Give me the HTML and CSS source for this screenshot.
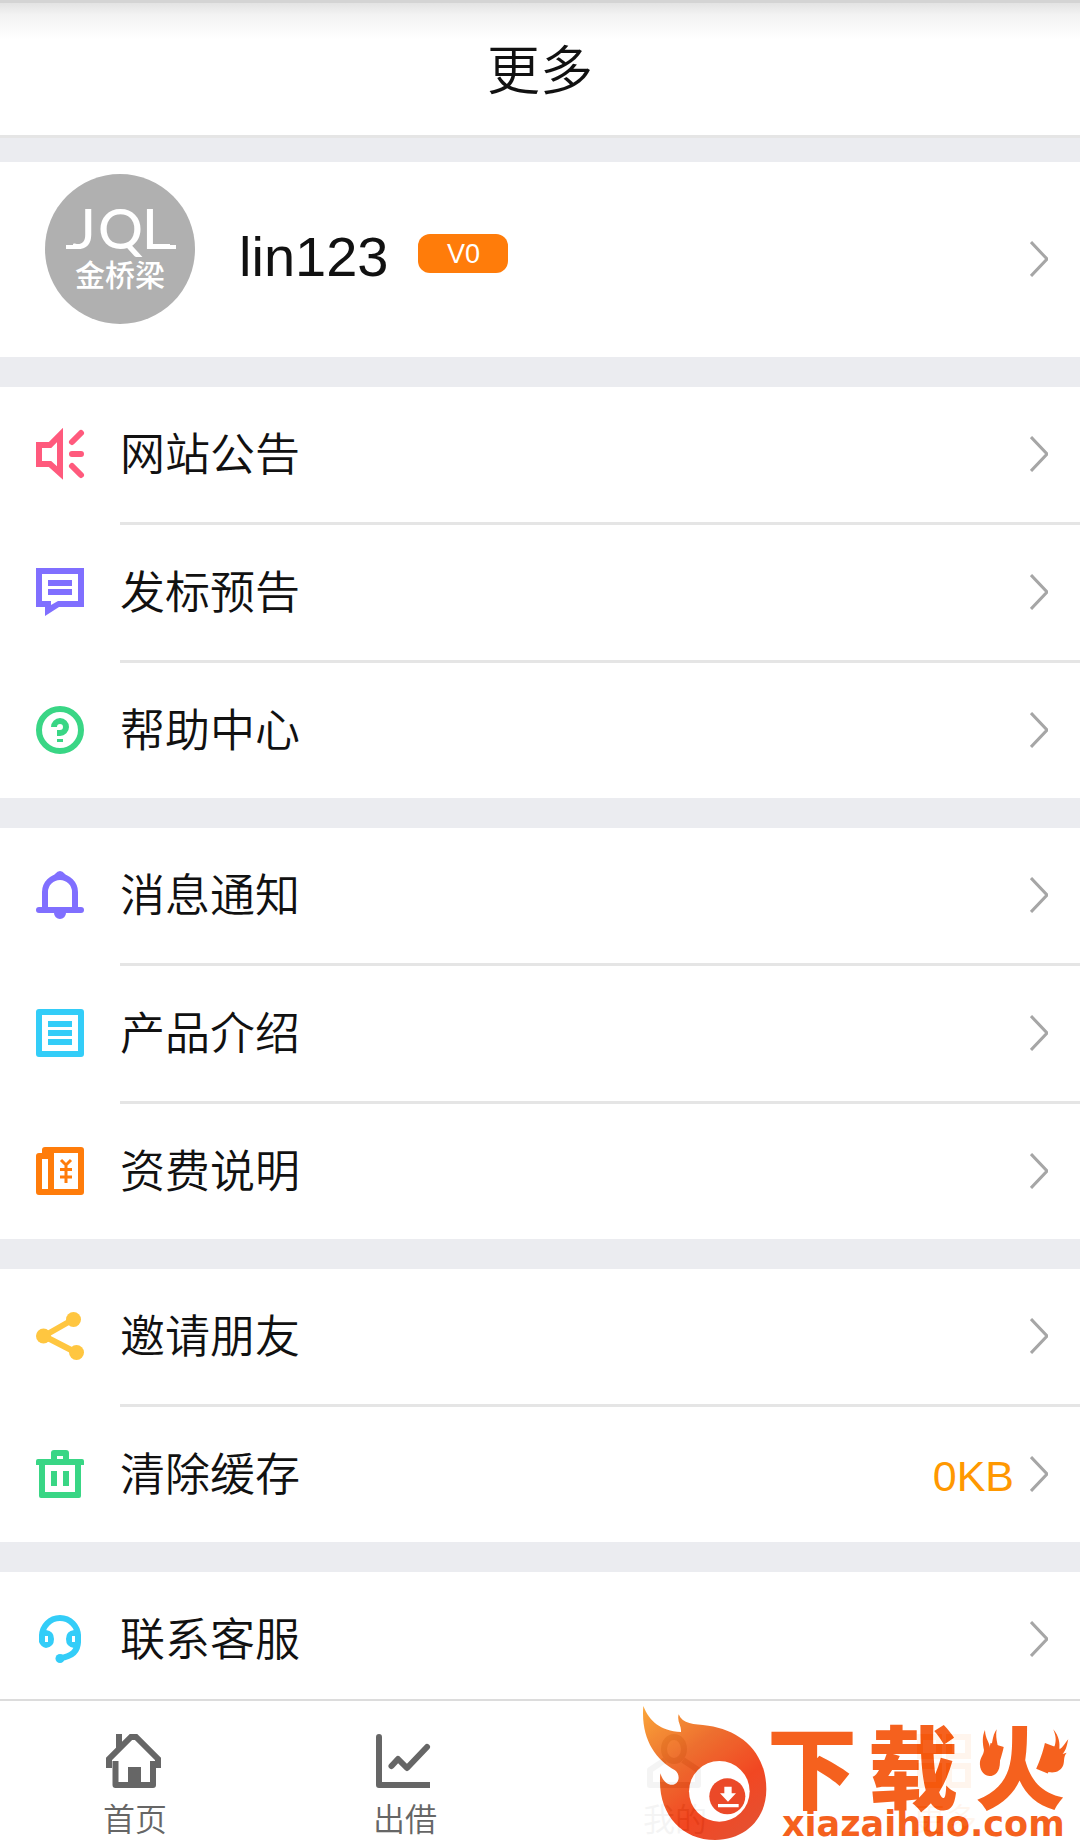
FILE: index.html
```html
<!DOCTYPE html>
<html lang="zh-CN">
<head>
<meta charset="utf-8">
<meta name="viewport" content="width=device-width, initial-scale=1">
<title>更多</title>
<link rel="stylesheet" href="styles.css">
</head>
<body>
<svg class="defs" aria-hidden="true">
  <symbol id="chevron" viewBox="0 0 18 36"><path d="M1 1L17 18L1 35" fill="none" stroke="#a6a6a6" stroke-width="3"/></symbol>
</svg>
<div class="app">
  <header class="header"><h1 class="title">更多</h1></header>

  <main class="content">
    <a class="profile" href="#profile">
      <svg class="avatar" viewBox="0 0 150 150" role="img" aria-label="JQL 金桥梁">
        <circle cx="75" cy="75" r="75" fill="#b0b0b0"/>
        <g fill="#fff">
          <text class="logo-latin" x="27 53 97" y="75">JQL</text>
          <path d="M21 71H36V75H21ZM116 71H131V75H116Z"/>
          <text class="logo-cjk" x="75" y="112" text-anchor="middle">金桥梁</text>
        </g>
      </svg>
      <span class="name">lin123</span>
      <span class="badge">V0</span>
      <svg class="chevron"><use href="#chevron"/></svg>
    </a>

    <nav class="group">
      <a class="row" href="#notice">
        <svg class="icon" viewBox="0 0 48 48" fill="none" stroke="#ff5a7d" stroke-width="6"><path d="M3 15H14L24 5V43L14 34H3Z"/><path stroke-linecap="round" d="M36 12L45 3M36 24H45M36 36L45 45"/></svg>
        <span class="cell"><span class="label">网站公告</span><svg class="chevron"><use href="#chevron"/></svg></span>
      </a>
      <a class="row" href="#preview">
        <svg class="icon" viewBox="0 0 48 48" fill="#806fff"><path fill-rule="evenodd" d="M0 0H48V39H23L9 48V39H0ZM6 6V33H15V37L22 33H42V6Z"/><path d="M12 12H36V18H12ZM12 21H36V27H12Z"/></svg>
        <span class="cell"><span class="label">发标预告</span><svg class="chevron"><use href="#chevron"/></svg></span>
      </a>
      <a class="row" href="#help">
        <svg class="icon" viewBox="0 0 48 48" fill="none" stroke="#39d685" stroke-width="6"><circle cx="24" cy="24" r="21"/><path d="M18 21a6 6 0 1 1 6 6h-3"/><path stroke-width="3" d="M21 34.500H27"/></svg>
        <span class="cell"><span class="label">帮助中心</span><svg class="chevron"><use href="#chevron"/></svg></span>
      </a>
    </nav>

    <nav class="group">
      <a class="row" href="#messages">
        <svg class="icon" viewBox="0 0 48 48" fill="#806fff"><path fill="none" stroke="#806fff" stroke-width="6" d="M9 39V21a15 15 0 0 1 30 0V39"/><path d="M14 7Q17 6 19 3Q24 -3 29 3Q31 6 34 7L30 8H18ZM18 42a6 6 0 0 0 12 0Z"/><rect y="36" width="48" height="6" rx="3"/></svg>
        <span class="cell"><span class="label">消息通知</span><svg class="chevron"><use href="#chevron"/></svg></span>
      </a>
      <a class="row" href="#products">
        <svg class="icon" viewBox="0 0 48 48" fill="#33cdf8"><path fill-rule="evenodd" d="M3 0H45Q48 0 48 3V45Q48 48 45 48H3Q0 48 0 45V3Q0 0 3 0ZM6 6V42H42V6Z"/><path d="M12 12H36V18H12ZM12 21H36V27H12ZM12 30H36V36H12Z"/></svg>
        <span class="cell"><span class="label">产品介绍</span><svg class="chevron"><use href="#chevron"/></svg></span>
      </a>
      <a class="row" href="#fees">
        <svg class="icon" viewBox="0 0 48 48" fill="#ff7c0a"><path fill-rule="evenodd" d="M9 0H45Q48 0 48 3V45Q48 48 45 48H3Q0 48 0 45V9Q0 6 3 6H6V3Q6 0 9 0ZM18 6V42H42V6ZM6 12V42H12V12Z"/><path fill="none" stroke="#ff7c0a" stroke-width="3" d="M25 13L30 18L35 13M30 18V36M24 22.500H36M24 30H36"/></svg>
        <span class="cell"><span class="label">资费说明</span><svg class="chevron"><use href="#chevron"/></svg></span>
      </a>
    </nav>

    <nav class="group">
      <a class="row" href="#invite">
        <svg class="icon" viewBox="0 0 48 48" fill="#ffc640"><path fill="none" stroke="#ffc640" stroke-width="6" d="M37 7.500L8 24L40 40.500"/><circle cx="37.500" cy="7.500" r="7.500"/><circle cx="7.500" cy="24" r="7.500"/><circle cx="40.500" cy="40.500" r="7.500"/></svg>
        <span class="cell"><span class="label">邀请朋友</span><svg class="chevron"><use href="#chevron"/></svg></span>
      </a>
      <a class="row" href="#cache">
        <svg class="icon" viewBox="0 0 48 48" fill="#39d685"><path fill-rule="evenodd" d="M18 0H30Q33 0 33 3V9H46Q48 9 48 11V15H45V46Q45 48 43 48H5Q3 48 3 46V15H0V11Q0 9 2 9H15V3Q15 0 18 0ZM21 6V9H27V6ZM9 15V42H39V15Z"/><path d="M15 21H21V36H15ZM27 21H33V36H27Z"/></svg>
        <span class="cell"><span class="label">清除缓存</span><span class="value">0KB</span><svg class="chevron"><use href="#chevron"/></svg></span>
      </a>
    </nav>

    <nav class="group">
      <a class="row" href="#service">
        <svg class="icon" viewBox="0 0 48 48" fill="#33cdf8"><path fill="none" stroke="#33cdf8" stroke-width="6" d="M6 24V21a18 18 0 0 1 36 0V26Q42 41 24 43"/><circle cx="24" cy="43.500" r="4.500"/><path fill-rule="evenodd" d="M3 20Q6 15 10 15Q18 16 18 24Q18 32 10 33Q5 32 3 27ZM9 21V27H12V21ZM45 20Q42 15 38 15Q30 16 30 24Q30 32 38 33Q43 32 45 27ZM36 21V27H39V21Z"/></svg>
        <span class="cell"><span class="label">联系客服</span><svg class="chevron"><use href="#chevron"/></svg></span>
      </a>
    </nav>
  </main>

  <footer class="footer">
    <nav class="tabs">
      <a class="tab" href="#home">
        <svg class="tab-icon" viewBox="0 0 58 54" fill="none" stroke="#666" stroke-width="6"><path d="M3 34V25L25 3H30L52 25V34"/><path stroke-linejoin="round" d="M9.500 27V51H47V27"/><path fill="#666" stroke="none" d="M22 33H35V50H22ZM10 0H16V10L10 17Z"/></svg>
        <span>首页</span>
      </a>
      <a class="tab" href="#lend">
        <svg class="tab-icon" viewBox="0 0 58 54" fill="none" stroke="#666" stroke-width="6" stroke-linejoin="round"><path stroke-linecap="round" d="M15.500 32L22 25L31 34L51 13M3 3V20"/><path d="M3 3V51H54"/></svg>
        <span>出借</span>
      </a>
      <a class="tab" href="#mine">
        <svg class="tab-icon" viewBox="0 0 58 54" fill="none" stroke="#666" stroke-width="6"><ellipse cx="28" cy="15" rx="10" ry="12"/><path stroke-linejoin="round" d="M19 26L4 36V51H52V36L37 26"/></svg>
        <span>我的</span>
      </a>
      <a class="tab" href="#more" aria-current="page">
        <svg class="tab-icon" viewBox="0 0 58 54" fill="none" stroke="#ff7c0a" stroke-width="6"><path d="M4 3H23V22H4ZM33 3H52V22H33ZM4 32H23V51H4ZM33 32H52V51H33Z"/></svg>
        <span>更多</span>
      </a>
    </nav>
    <svg class="watermark" viewBox="0 0 443 140" role="img" aria-label="下载火 xiazaihuo.com">
      <defs><linearGradient id="flame" x1="0" y1="0" x2=".7" y2="1"><stop offset="0" stop-color="#fba02a"/><stop offset=".4" stop-color="#ec6420"/><stop offset=".75" stop-color="#f13a12"/><stop offset="1" stop-color="#e64220"/></linearGradient></defs>
      <rect width="443" height="140" fill="#fff"/>
      <g transform="scale(.3333) translate(-111 -45)">
        <path fill="url(#flame)" d="M130 48C148 94 180 122 243 126C245 107 230 95 236 73C248 102 280 103 325 107C420 120 499 185 499 298C499 390 432 450 346 450C240 450 170 365 181 250C188 275 208 291 225 282C240 274 239 251 225 241C165 208 122 145 130 48Z"/>
        <circle cx="358" cy="304" r="91" fill="#fff"/>
        <circle cx="382" cy="319" r="54" fill="#ea3c18"/>
        <path fill="#fff" d="M373 290H395V310H408L384 335L360 310H373ZM354 342H416V352H354Z"/>
      </g>
      <g fill="#f5560e">
        <text class="mark-cjk" x="130 231 338" y="97">下载火</text>
        <text class="mark-latin" x="145" y="131">xiazaihuo.com</text>
        <g transform="scale(.3333) translate(-111 -45)">
          <path d="M1155 120C1156 148 1170 158 1170 175C1180 160 1175 140 1190 118C1184 150 1200 175 1200 215C1200 245 1186 258 1168 258C1148 256 1138 236 1140 215C1143 200 1151 195 1152 180C1148 160 1146 140 1155 120Z"/>
          <path d="M1360 118C1378 140 1380 160 1378 178C1390 172 1394 160 1405 148C1400 168 1400 178 1388 192L1400 188C1390 200 1394 212 1390 225C1384 242 1368 249 1350 247C1328 244 1319 226 1324 210C1330 190 1355 185 1364 168C1370 150 1367 136 1360 118Z"/>
        </g>
      </g>
    </svg>
  </footer>
</div>
</body>
</html>
```
FILE: styles.css
```css
* { box-sizing: border-box; }

body {
  margin: 0;
  background: #ebecf0;
  color: #111;
  font-family: "Liberation Sans", "Noto Sans CJK SC", sans-serif;
  font-weight: 350;
}

a { color: inherit; text-decoration: none; }

.defs { display: none; }

.app {
  display: flex;
  flex-direction: column;
  height: 100vh;
}

.header {
  flex: none;
  padding: 30px 0 25px;
  border-top: 3px solid #d4d4d4;
  border-bottom: 3px solid #e5e5e5;
  background: linear-gradient(#e3e3e3, #f3f3f3 12px, #fff 36px);
  text-align: center;
}

.title {
  margin: 0;
  font-size: 53px;
  font-weight: 350;
  line-height: 77px;
}

.content {
  display: flex;
  flex: 1;
  flex-direction: column;
  gap: 30px;
  min-height: 0;
  padding-top: 24px;
  overflow: auto;
  scrollbar-width: none;
}

.profile {
  display: flex;
  flex: none;
  align-items: center;
  padding: 12px 32px 33px 45px;
  background: #fff;
}

.avatar {
  flex: none;
  width: 150px;
  height: 150px;
}

.logo-latin { font: 500 56px Lato, sans-serif; }
.logo-cjk { font: 500 30px "Noto Sans CJK SC", sans-serif; }

.name {
  margin-left: 44px;
  padding-top: 16px;
  font-size: 56px;
  line-height: 64px;
}

.badge {
  width: 90px;
  margin: 8px 0 0 30px;
  padding-top: 2px;
  border-radius: 12px;
  background: #ff7c0a;
  color: #fff;
  font-size: 27px;
  line-height: 37px;
  text-align: center;
}

.chevron {
  flex: none;
  width: 18px;
  height: 36px;
  margin-left: auto;
}

.profile .chevron { margin-top: 20px; }

.group { flex: none; background: #fff; }

.row {
  display: flex;
  align-items: center;
  gap: 36px;
  padding: 0 0 1px 36px;
}

.icon {
  flex: none;
  width: 48px;
  height: 48px;
  overflow: visible;
}

.cell {
  display: flex;
  flex: 1;
  align-items: center;
  height: 134px;
  padding-right: 32px;
}

.row + .row { position: relative; padding-top: 3px; }

.row + .row::before {
  position: absolute;
  top: 0;
  right: 0;
  left: 120px;
  height: 3px;
  background: #e5e5e5;
  content: "";
}

.label {
  padding-top: 4px;
  font-size: 45px;
  line-height: 60px;
}

.value {
  margin-left: auto;
  padding-top: 5px;
  color: #ff9800;
  font-size: 43px;
}

.value + .chevron { margin-left: 16px; }

.footer {
  position: relative;
  flex: none;
  border-top: 2px solid #dcdcdc;
  background: #fff;
}

.tabs { display: grid; grid-template-columns: repeat(4, 1fr); }

.tab {
  display: flex;
  flex-direction: column;
  align-items: center;
  gap: 8px;
  padding: 33px 0 1px;
  color: #666;
  font-size: 32px;
  line-height: 48px;
}

.tab-icon { width: 58px; height: 54px; }

.tab[aria-current] { color: #ff7c0a; }

.watermark {
  position: absolute;
  right: 0;
  bottom: 0;
  width: 443px;
  height: 140px;
  opacity: .93;
}

.mark-cjk { font: 900 90px "Noto Sans CJK SC", sans-serif; }
.mark-latin { font: 700 35px "DejaVu Sans", sans-serif; }
```
